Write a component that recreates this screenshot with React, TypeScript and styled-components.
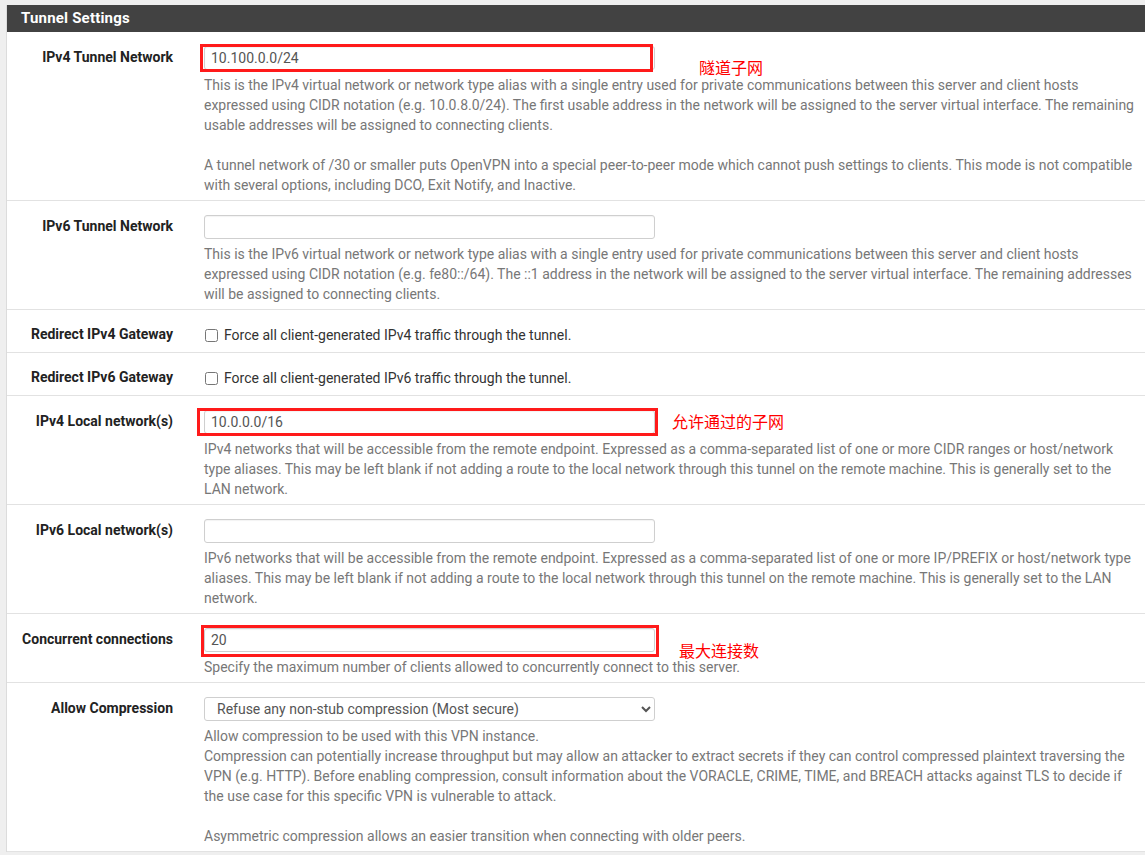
import React from "react";
import styled, { createGlobalStyle } from "styled-components";

const GlobalStyle = createGlobalStyle`
  html, body {
    margin: 0;
    padding: 0;
    background: #efefef;
    overflow: hidden;
  }
  body {
    font-family: Roboto, "Liberation Sans", sans-serif;
  }
`;

const Panel = styled.div`
  margin: 5px 0 0 6px;
  width: 1144px;
  background: #fff;
  border-left: 1px solid #dcdcdc;
`;

const PanelHeading = styled.div`
  background: #424242;
  color: #fff;
  height: 27px;
  line-height: 27px;
  padding-left: 14px;
  font-size: 15px;
  font-weight: 700;
  letter-spacing: 0.2px;
`;

const Row = styled.div<{ $compact?: boolean }>`
  display: grid;
  grid-template-columns: 182px 1fr;
  border-bottom: 1px solid #e2e2e2;
  padding: ${(p) => (p.$compact ? "13px 0 5px" : "14px 0 5px")};
`;

const Label = styled.div`
  text-align: right;
  padding-right: 16px;
  font-size: 14px;
  font-weight: 700;
  color: #222;
  line-height: 22px;
`;

const Field = styled.div`
  padding: 0 15px;
`;

const FieldWrap = styled.div`
  position: relative;
  width: 451px;
`;

const TextInput = styled.input`
  box-sizing: border-box;
  display: block;
  width: 451px;
  height: 24px;
  border: 1px solid #cfcfcf;
  border-radius: 3px;
  padding: 0 6px;
  font-family: Roboto, "Liberation Sans", sans-serif;
  font-size: 14px;
  color: #555;
  background: #fff;
  box-shadow: inset 0 1px 1px rgba(0, 0, 0, 0.05);
`;

const Select = styled.select`
  box-sizing: border-box;
  display: block;
  width: 451px;
  height: 24px;
  border: 1px solid #cfcfcf;
  border-radius: 3px;
  padding: 0 6px 0 8px;
  font-family: Roboto, "Liberation Sans", sans-serif;
  font-size: 14px;
  color: #555;
  background: #fff;
`;

const Highlight = styled.div<{ $l: number; $t: number; $w: number; $h: number }>`
  position: absolute;
  left: ${(p) => p.$l}px;
  top: ${(p) => p.$t}px;
  width: ${(p) => p.$w}px;
  height: ${(p) => p.$h}px;
  box-sizing: border-box;
  border: 3px solid #ff1a1a;
  pointer-events: none;
`;

const Note = styled.span<{ $l: number; $t: number }>`
  position: absolute;
  left: ${(p) => p.$l}px;
  top: ${(p) => p.$t}px;
  white-space: nowrap;
  font-family: "Noto Sans CJK SC", sans-serif;
  font-size: 16px;
  line-height: 16px;
  color: #ff0000;
`;

const Help = styled.div`
  margin-top: 5px;
  font-size: 14px;
  line-height: 20px;
  color: #777;
`;

const Para = styled.p`
  margin: 0;
  & + & {
    margin-top: 20px;
  }
`;

const CheckLabel = styled.label`
  display: flex;
  align-items: center;
  gap: 6px;
  height: 24px;
  font-size: 14px;
  color: #333;
`;

const CheckBox = styled.input`
  margin: 0 0 0 1px;
  width: 13px;
  height: 13px;
`;

type Mark = { box: [number, number, number, number]; note: string; at: [number, number] };

const InputField = ({ value, mark }: { value: string; mark?: Mark }) => (
  <FieldWrap>
    <TextInput type="text" defaultValue={value} />
    {mark && (
      <>
        <Highlight $l={mark.box[0]} $t={mark.box[1]} $w={mark.box[2]} $h={mark.box[3]} />
        <Note $l={mark.at[0]} $t={mark.at[1]}>
          {mark.note}
        </Note>
      </>
    )}
  </FieldWrap>
);

export default function App() {
  return (
    <>
      <GlobalStyle />
      <Panel>
        <PanelHeading>Tunnel Settings</PanelHeading>

        <Row>
          <Label>IPv4 Tunnel Network</Label>
          <Field>
            <InputField
              value="10.100.0.0/24"
              mark={{ box: [-4, -2, 453, 28], note: "隧道子网", at: [495, 13] }}
            />
            <Help>
              <Para>
                This is the IPv4 virtual network or network type alias with a single entry used for private
                communications between this server and client hosts expressed using CIDR notation (e.g.
                10.0.8.0/24). The first usable address in the network will be assigned to the server virtual
                interface. The remaining usable addresses will be assigned to connecting clients.
              </Para>
              <Para>
                A tunnel network of /30 or smaller puts OpenVPN into a special peer-to-peer mode which cannot push
                settings to clients. This mode is not compatible with several options, including DCO, Exit Notify,
                and Inactive.
              </Para>
            </Help>
          </Field>
        </Row>

        <Row>
          <Label>IPv6 Tunnel Network</Label>
          <Field>
            <InputField value="" />
            <Help>
              <Para>
                This is the IPv6 virtual network or network type alias with a single entry used for private
                communications between this server and client hosts expressed using CIDR notation (e.g.
                fe80::/64). The ::1 address in the network will be assigned to the server virtual interface. The
                remaining addresses will be assigned to connecting clients.
              </Para>
            </Help>
          </Field>
        </Row>

        <Row $compact>
          <Label>Redirect IPv4 Gateway</Label>
          <Field>
            <CheckLabel>
              <CheckBox type="checkbox" />
              Force all client-generated IPv4 traffic through the tunnel.
            </CheckLabel>
          </Field>
        </Row>

        <Row $compact>
          <Label>Redirect IPv6 Gateway</Label>
          <Field>
            <CheckLabel>
              <CheckBox type="checkbox" />
              Force all client-generated IPv6 traffic through the tunnel.
            </CheckLabel>
          </Field>
        </Row>

        <Row>
          <Label>IPv4 Local network(s)</Label>
          <Field>
            <InputField
              value="10.0.0.0/16"
              mark={{ box: [-7, -2, 461, 28], note: "允许通过的子网", at: [468, 3] }}
            />
            <Help>
              <Para>
                IPv4 networks that will be accessible from the remote endpoint. Expressed as a comma-separated list
                of one or more CIDR ranges or host/network type aliases. This may be left blank if not adding a
                route to the local network through this tunnel on the remote machine. This is generally set to the
                LAN network.
              </Para>
            </Help>
          </Field>
        </Row>

        <Row>
          <Label>IPv6 Local network(s)</Label>
          <Field>
            <InputField value="" />
            <Help>
              <Para>
                IPv6 networks that will be accessible from the remote endpoint. Expressed as a comma-separated list
                of one or more IP/PREFIX or host/network type aliases. This may be left blank if not adding a route
                to the local network through this tunnel on the remote machine. This is generally set to the LAN
                network.
              </Para>
            </Help>
          </Field>
        </Row>

        <Row>
          <Label>Concurrent connections</Label>
          <Field>
            <InputField
              value="20"
              mark={{ box: [-3, -3, 458, 32], note: "最大连接数", at: [475, 14] }}
            />
            <Help>
              <Para>Specify the maximum number of clients allowed to concurrently connect to this server.</Para>
            </Help>
          </Field>
        </Row>

        <Row>
          <Label>Allow Compression</Label>
          <Field>
            <FieldWrap>
              <Select defaultValue="no">
                <option value="no">Refuse any non-stub compression (Most secure)</option>
              </Select>
            </FieldWrap>
            <Help>
              <Para>
                Allow compression to be used with this VPN instance.
                <br />
                Compression can potentially increase throughput but may allow an attacker to extract secrets if they
                can control compressed plaintext traversing the VPN (e.g. HTTP). Before enabling compression, consult
                information about the VORACLE, CRIME, TIME, and BREACH attacks against TLS to decide if the use case
                for this specific VPN is vulnerable to attack.
              </Para>
              <Para>Asymmetric compression allows an easier transition when connecting with older peers.</Para>
            </Help>
          </Field>
        </Row>
      </Panel>
    </>
  );
}
